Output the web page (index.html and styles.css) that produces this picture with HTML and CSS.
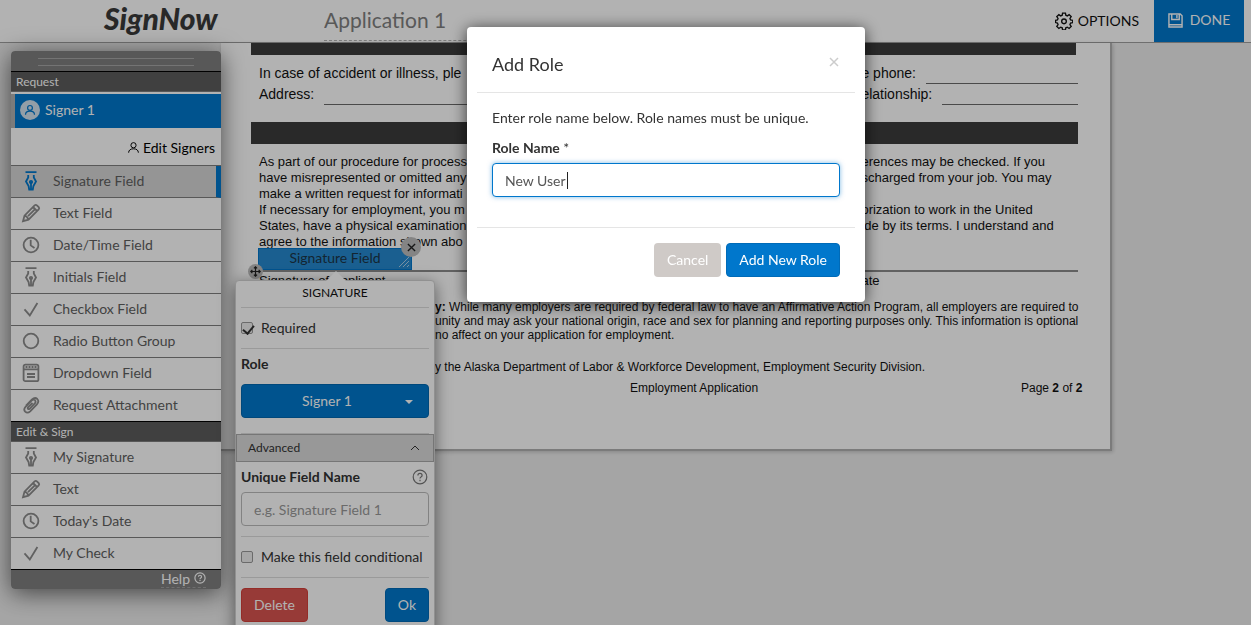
FILE: index.html
```html
<!DOCTYPE html>
<html lang="en">

<head>
    <meta charset="UTF-8" />
    <meta name="viewport" content="width=device-width, initial-scale=1" />
    <title>Application 1 - SignNow</title>
    <link rel="stylesheet" href="styles.css">
</head>

<body>
    <!-- Shared icons -->
    <svg class="sprite" aria-hidden="true">
        <symbol id="pen" viewBox="0 0 20 20">
            <path d="M4.5 1.2h11M7.2 4v2.500L5 10.500l2.600 4.500.6 3.500h3.600l.6-3.500 2.600-4.500-2.200-4V4M10 11v7" />
            <circle cx="10" cy="11" r="1.2" />
        </symbol>
        <symbol id="pencil" viewBox="0 0 20 20">
            <path d="M2 18.2l1.5-5.6L13.6 2.4q1.2-1 2.3 0l1.8 1.8q1 1.2 0 2.3L7.5 16.6zM12 4l4.2 4.2M3.5 12.6q2.5.4 4 4M7 13.200l6.600-6.600" />
        </symbol>
        <symbol id="clock" viewBox="0 0 20 20">
            <circle cx="10" cy="10" r="7.4" />
            <path d="M9.700 4.800v5.600l3.800 2.600" />
        </symbol>
        <symbol id="check" viewBox="0 0 20 20">
            <path d="M3.500 10.400l5.300 6L16.400 4" />
        </symbol>
        <symbol id="radio" viewBox="0 0 20 20">
            <circle cx="10" cy="10" r="7.300" />
        </symbol>
        <symbol id="list" viewBox="0 0 20 20">
            <rect x="2.600" y="1.600" width="14.800" height="16.600" rx="1.800" />
            <path d="M3 6.400h14M6 11h8M6 14h8" />
            <path d="M4.500 4h11" stroke-dasharray="2 1" />
        </symbol>
        <symbol id="clip" viewBox="0 0 20 20">
            <path d="M5 10.600l6-6.200q3-2.600 5.300-.4 2.200 2.400-.4 5.400l-6.700 7q-2.800 2.400-5 .3-2-2.400.3-4.900l6.300-6.400q1.800-1.500 3.200-.2 1.200 1.500-.2 3.200l-5.200 5.400q-.9.700-1.600.1-.6-.8.200-1.700l4.300-4.400" />
        </symbol>
        <symbol id="user" viewBox="0 0 20 20">
            <circle cx="10" cy="6.500" r="4" />
            <path d="M2.500 18c0-4 3-6 7.500-6s7.500 2 7.500 6" />
        </symbol>
        <symbol id="help" viewBox="0 0 20 20">
            <circle cx="10" cy="10" r="8.500" />
            <path d="M7.400 8q0-2.600 2.600-2.600T12.600 8q0 1.300-1.400 2-1.200.7-1.200 2M10 13.300v1.900" />
        </symbol>
    </svg>

    <header class="topbar">
        <a class="logo" href="#">SignNow</a>
        <input class="doc-title" type="text" value="Application 1" aria-label="Document name">
        <button class="options" type="button">
            <svg class="gear" viewBox="0 0 20 20">
                <path d="M8.400 1.200h3.200l.4 2.400 1.700.7 2-1.400 2.300 2.300-1.400 2 .7 1.700 2.400.4v2.400l-2.400.6-.7 1.700 1.400 2-2.300 2.300-2-1.400-1.700.7-.4 2.200H8.400L8 17.600l-1.700-.7-2 1.400L2 16l1.400-2-.7-1.700-2.100-.6V9.300l2.100-.4.700-1.700L2 5.200l2.300-2.300 2 1.400L8 3.600z" />
                <circle cx="10" cy="10.400" r="2.600" />
            </svg>
            OPTIONS
        </button>
        <button class="done" type="button">
            <svg class="disk" viewBox="0 0 16 16">
                <path d="M1 1h12l2 2v12H1zM4 1v6h8V1M1 12.500h14" />
                <path d="M9.500 2v3.500" />
            </svg>
            DONE
        </button>
    </header>

    <main class="workspace">
        <aside class="palette">
            <div class="grip"></div>
            <h2 class="palette-heading">Request</h2>
            <button class="signer" type="button">
                <span class="avatar"><svg><use href="#user" /></svg></span>
                Signer 1
            </button>
            <a class="edit-signers" href="#"><svg><use href="#user" /></svg>Edit Signers</a>
            <div class="tools">
                <button class="tool active" type="button"><svg><use href="#pen" /></svg>Signature Field</button>
                <button class="tool" type="button"><svg><use href="#pencil" /></svg>Text Field</button>
                <button class="tool" type="button"><svg><use href="#clock" /></svg>Date/Time Field</button>
                <button class="tool" type="button"><svg><use href="#pen" /></svg>Initials Field</button>
                <button class="tool" type="button"><svg><use href="#check" /></svg>Checkbox Field</button>
                <button class="tool" type="button"><svg><use href="#radio" /></svg>Radio Button Group</button>
                <button class="tool" type="button"><svg><use href="#list" /></svg>Dropdown Field</button>
                <button class="tool" type="button"><svg><use href="#clip" /></svg>Request Attachment</button>
            </div>
            <h2 class="palette-heading">Edit &amp; Sign</h2>
            <div class="tools">
                <button class="tool" type="button"><svg><use href="#pen" /></svg>My Signature</button>
                <button class="tool" type="button"><svg><use href="#pencil" /></svg>Text</button>
                <button class="tool" type="button"><svg><use href="#clock" /></svg>Today's Date</button>
                <button class="tool" type="button"><svg><use href="#check" /></svg>My Check</button>
            </div>
            <div class="palette-foot"><a href="#">Help <svg><use href="#help" /></svg></a></div>
        </aside>

        <article class="page">
            <div class="band band-top"></div>
            <div class="contact">
                <div class="blank">In case of accident or illness, ple</div>
                <div class="blank">e phone:<span class="line"></span></div>
                <div class="blank">Address:<span class="line"></span></div>
                <div class="blank">elationship:<span class="line"></span></div>
            </div>
            <div class="band"></div>
            <div class="terms">
                <p>As part of our procedure for process<br>have misrepresented or omitted any<br>make a written request for informati<br>If necessary for employment, you m<br>States, have a physical examination<br>agree to the information shown abo</p>
                <p>erences may be checked. If you<br>scharged from your job. You may<br><br>orization to work in the United<br>ide by its terms. I understand and</p>
            </div>
            <div class="sign-line">
                <span>Signature of Applicant</span>
                <span>ate</span>
            </div>
            <div class="notice">
                <p><b>y:</b> While many employers are required by federal law to have an Affirmative Action Program, all employers are required to<br>unity and may ask your national origin, race and sex for planning and reporting purposes only. This information is optional<br>no affect on your application for employment.</p>
                <p>y the Alaska Department of Labor &amp; Workforce Development, Employment Security Division.</p>
            </div>
            <footer class="page-foot">
                <span>Employment Application</span>
                <span>Page <b>2</b> of <b>2</b></span>
            </footer>

            <!-- Field placed on the document -->
            <div class="field">
                Signature Field
                <button class="field-close" type="button" aria-label="Remove field">
                    <svg viewBox="0 0 10 10"><path d="M1 1l8 8M9 1l-8 8" /></svg>
                </button>
                <span class="field-move">
                    <svg viewBox="0 0 14 14"><path d="M7 1v12M1 7h12M5 3l2-2 2 2M5 11l2 2 2-2M3 5L1 7l2 2M11 5l2 2-2 2" /></svg>
                </span>
                <svg class="field-resize" viewBox="0 0 12 12"><path d="M1 11L11 1M5 11l6-6M9 11l2-2" /></svg>
            </div>

            <form class="popover">
                <h3>SIGNATURE</h3>
                <label class="tick"><input type="checkbox" checked>Required</label>
                <div class="group role">
                    <label for="role">Role</label>
                    <div class="select">
                        <select id="role">
                            <option>Signer 1</option>
                        </select>
                    </div>
                </div>
                <button class="advanced" type="button">Advanced
                    <svg viewBox="0 0 10 10"><path d="M1 7l4-4 4 4" /></svg>
                </button>
                <div class="group">
                    <label for="field-name">Unique Field Name <svg><use href="#help" /></svg></label>
                    <input class="text-input" id="field-name" type="text" placeholder="e.g. Signature Field 1">
                </div>
                <label class="tick"><input type="checkbox">Make this field conditional</label>
                <div class="popover-actions">
                    <button class="btn btn-danger" type="button">Delete</button>
                    <button class="btn btn-primary" type="button">Ok</button>
                </div>
            </form>
        </article>
    </main>

    <div class="backdrop">
        <form class="modal" role="dialog" aria-labelledby="modal-title">
            <div class="modal-head">
                <h1 id="modal-title">Add Role</h1>
                <button class="modal-close" type="button" aria-label="Close">
                    <svg viewBox="0 0 10 10"><path d="M1 1l8 8M9 1l-8 8" /></svg>
                </button>
            </div>
            <div class="modal-body">
                <p>Enter role name below. Role names must be unique.</p>
                <label for="role-name">Role Name <span>*</span></label>
                <div class="role-input">
                    <input class="text-input focused" id="role-name" type="text" value="New User">
                    <span class="caret"></span>
                </div>
            </div>
            <div class="modal-foot">
                <button class="btn btn-muted" type="button">Cancel</button>
                <button class="btn btn-primary" type="button">Add New Role</button>
            </div>
        </form>
    </div>
</body>

</html>
```
FILE: styles.css
```css
* {
    box-sizing: border-box;
}

html,
body {
    margin: 0;
    padding: 0;
    height: 100%;
    overflow: hidden;
}

body {
    display: flex;
    flex-direction: column;
    font-family: 'Lato', sans-serif;
    font-size: 14px;
    line-height: 20px;
    color: #333;
    background: #ededed;
}

h1,
h2,
h3,
p {
    margin: 0;
    font-weight: normal;
}

a {
    color: inherit;
    text-decoration: none;
}

button,
input,
select {
    margin: 0;
    padding: 0;
    border: none;
    background: none;
    font: inherit;
    color: inherit;
}

svg {
    flex: none;
    fill: none;
    stroke: currentColor;
    stroke-width: 1.5;
}

.sprite {
    position: absolute;
    width: 0;
    height: 0;
}

/* Top bar */
.topbar {
    display: flex;
    align-items: center;
    flex: none;
    height: 43px;
    padding: 0 7px 0 104px;
    background: #fff;
    border-bottom: 1px solid #a0a0a0;
}

.logo {
    width: 220px;
    padding-bottom: 6px;
    font-size: 30px;
    line-height: 36px;
    font-weight: 900;
    font-style: italic;
    color: #3a3a3a;
}

.doc-title {
    flex: 1;
    height: 40px;
    margin-right: 340px;
    padding-bottom: 2px;
    border-bottom: 1px dashed #b4b4b4;
    font-size: 21px;
    color: #808080;
}

.options {
    display: flex;
    align-items: center;
    gap: 5px;
    margin-right: 15px;
    color: #111;
}

.gear {
    width: 18px;
    height: 18px;
}

.done {
    display: flex;
    align-items: center;
    justify-content: center;
    gap: 7px;
    width: 90px;
    height: 42px;
    padding-bottom: 2px;
    background: #07c;
    color: #fff;
}

.disk {
    width: 15px;
    height: 15px;
}

/* Workspace */
.workspace {
    display: flex;
    align-items: flex-start;
    flex: 1;
    min-height: 0;
}

.palette {
    position: relative;
    z-index: 1;
    flex: none;
    width: 210px;
    margin: 8px 0 0 11px;
    border-radius: 4px;
    background: #fff;
    box-shadow: 0 4px 24px rgba(0, 0, 0, 0.6);
}

.grip {
    height: 21px;
    padding: 7px 27px;
    border-radius: 4px 4px 0 0;
    border-bottom: 1px solid #000;
    background: #7f7f7f;
}

.grip::before {
    content: '';
    display: block;
    height: 6px;
    border: solid #a6a6a6;
    border-width: 1px 0;
}

.palette-heading {
    height: 20px;
    padding-left: 5px;
    border-bottom: 1px solid #7f7f7f;
    background: #5c5c5c;
    color: #fff;
    font-size: 12px;
}

.signer {
    display: flex;
    align-items: center;
    gap: 5px;
    width: 100%;
    height: 34px;
    margin-top: 2px;
    padding: 0 5px 2px;
    border-left: 4px solid #b0b0b0;
    background: #07c;
    color: #fff;
}

.avatar {
    display: flex;
    align-items: center;
    justify-content: center;
    width: 20px;
    height: 20px;
    border-radius: 50%;
    background: #d3e3ef;
    color: #07c;
}

.avatar svg {
    width: 12px;
    height: 12px;
    stroke-width: 2;
}

.edit-signers {
    display: flex;
    align-items: center;
    justify-content: flex-end;
    gap: 3px;
    height: 38px;
    padding: 2px 6px 0 0;
    border-bottom: 1px solid #7f7f7f;
    color: #000;
}

.edit-signers svg {
    width: 13px;
    height: 13px;
}

.tool {
    display: flex;
    align-items: center;
    gap: 12px;
    width: 100%;
    height: 32px;
    padding: 0 0 2px 10px;
    border-bottom: 1px solid #7f7f7f;
    color: #5f5f5f;
}

.tool svg {
    width: 20px;
    height: 20px;
    color: #8c8c8c;
    stroke-width: 1.8;
}

.tool:last-child {
    border-bottom-color: #000;
}

.tool.active {
    border-right: 5px solid #07c;
    background: #d6d6d6;
}

.tool.active svg {
    color: #07c;
}

.palette-foot {
    display: flex;
    justify-content: flex-end;
    height: 19px;
    padding-right: 15px;
    border-radius: 0 0 4px 4px;
    background: #7f7f7f;
    line-height: 18px;
    color: #fff;
}

.palette-foot a {
    display: flex;
    gap: 4px;
    height: 18px;
    border-bottom: 1px dashed #a0a0a0;
}

.palette-foot svg {
    width: 12px;
    height: 12px;
    margin-top: 2px;
    stroke-width: 2;
}

/* Document page */
.page {
    position: relative;
    flex: 1;
    height: 408px;
    margin-right: 139px;
    padding: 0 32px 0 30px;
    border-right: 2px solid #b0b0b0;
    border-bottom: 2px solid #b0b0b0;
    background: #fff;
    box-shadow: 1px 1px 4px rgba(0, 0, 0, 0.2);
    font-family: 'Liberation Sans', Arial, sans-serif;
    color: #111;
}

.band {
    height: 22px;
    background: #3c3c3c;
}

.band-top {
    height: 12px;
    margin-right: 2px;
}

.contact,
.terms,
.sign-line {
    display: grid;
    grid-template-columns: 1fr 217px;
    font-size: 13px;
}

.contact {
    padding: 8px 0 0 8px;
    margin-bottom: 17px;
    font-size: 14px;
}

.blank {
    display: flex;
    gap: 10px;
    height: 21px;
}

.line {
    flex: 1;
    border-bottom: 1px solid #6a6a6a;
}

.terms {
    padding: 10px 0 0 8px;
    line-height: 16px;
}

.sign-line {
    margin: 20px 0 0 8px;
    border-top: 2px solid #8c8c8c;
    line-height: 18px;
}

.notice {
    padding: 10px 0 0 184px;
    font-size: 12px;
    line-height: 14px;
    white-space: nowrap;
}

.notice p + p {
    margin-top: 18px;
}

.page-foot {
    display: flex;
    justify-content: space-between;
    margin: 4px -4px 0 379px;
    font-size: 12px;
}

/* Placed field */
.field {
    position: absolute;
    top: 205px;
    left: 37px;
    width: 154px;
    height: 22px;
    border: 1px solid #07c;
    background: #2689cf;
    font-family: 'Lato', sans-serif;
    line-height: 18px;
    text-align: center;
    color: #1c3548;
}

.field-close,
.field-move {
    position: absolute;
    display: flex;
    align-items: center;
    justify-content: center;
    border-radius: 50%;
    background: #bdbdbd;
    color: #222;
}

.field-close {
    top: -12px;
    right: -10px;
    width: 20px;
    height: 20px;
}

.field-close svg {
    width: 9px;
    height: 9px;
}

.field-move {
    left: -11px;
    bottom: -10px;
    width: 15px;
    height: 15px;
}

.field-move svg {
    width: 11px;
    height: 11px;
}

.field-resize {
    position: absolute;
    right: 1px;
    bottom: 1px;
    width: 12px;
    height: 12px;
    stroke: #a9cfea;
    stroke-width: 1;
}

/* Field settings */
.popover {
    position: absolute;
    top: 237px;
    left: 14px;
    z-index: 2;
    width: 200px;
    padding-bottom: 5px;
    border: 1px solid #d0d0d0;
    border-radius: 4px;
    background: #fff;
    box-shadow: 0 4px 16px rgba(0, 0, 0, 0.5);
    font-family: 'Lato', sans-serif;
    color: #333;
}

.popover::before {
    content: '';
    position: absolute;
    top: -10px;
    left: 90px;
    border: solid transparent;
    border-width: 0 10px 10px;
    border-bottom-color: #fff;
}

.popover h3 {
    height: 27px;
    margin: 0 5px;
    border-bottom: 1px solid #ddd;
    font-size: 12px;
    line-height: 24px;
    text-align: center;
    color: #111;
}

.tick {
    display: flex;
    align-items: center;
    gap: 8px;
    height: 41px;
    margin: 0 5px;
    border-bottom: 1px solid #ddd;
}

.tick input {
    appearance: none;
    width: 12px;
    height: 12px;
    border: 1px solid #999;
    border-radius: 2px;
    background: #eee;
}

.tick input:checked::before {
    content: '';
    display: block;
    width: 5px;
    height: 9px;
    margin-left: 3px;
    border: solid #333;
    border-width: 0 2px 2px 0;
    transform: rotate(40deg);
}

.group {
    margin: 0 5px;
    padding: 5px 0 10px;
    border-bottom: 1px solid #ddd;
}

.group label {
    display: flex;
    align-items: center;
    justify-content: space-between;
    margin-bottom: 5px;
    font-weight: bold;
}

.group label svg {
    width: 16px;
    height: 16px;
    margin-right: 1px;
    color: #777;
}

.role {
    padding-bottom: 15px;
}

.role label {
    margin-bottom: 10px;
}

.select {
    position: relative;
}

.select select {
    appearance: none;
    width: 100%;
    height: 34px;
    padding-right: 16px;
    border: 1px solid #0067b0;
    border-radius: 4px;
    background: #07c;
    color: #fff;
    text-align: center;
    text-align-last: center;
}

.select::after {
    content: '';
    position: absolute;
    top: 16px;
    right: 16px;
    border: solid transparent;
    border-width: 4px 4px 0;
    border-top-color: #fff;
}

.advanced {
    display: flex;
    align-items: center;
    justify-content: space-between;
    width: 100%;
    height: 28px;
    padding: 0 13px 0 11px;
    border: 1px solid #aaa;
    background: #dadada;
    font-size: 12px;
}

.advanced svg {
    width: 10px;
    height: 10px;
    stroke-width: 1;
}

.text-input {
    width: 100%;
    height: 34px;
    padding: 0 12px;
    border: 1px solid #bbb;
    border-radius: 4px;
    background: #fff;
    color: #555;
}

.text-input::placeholder {
    color: #999;
    opacity: 1;
}

.text-input.focused {
    border-color: #07c;
    outline: none;
    box-shadow: 0 0 5px rgba(0, 119, 204, 0.5);
}

.popover-actions {
    display: flex;
    justify-content: space-between;
    padding: 10px 5px;
}

.btn {
    height: 34px;
    padding: 0 12px;
    border: 1px solid transparent;
    border-radius: 4px;
    color: #fff;
}

.btn-primary {
    border-color: #006bb8;
    background: #07c;
}

.btn-danger {
    border-color: #d43f3a;
    background: #d9534f;
}

.btn-muted {
    background: #cfcac7;
}

/* Dialog */
.backdrop {
    position: fixed;
    inset: 0;
    z-index: 10;
    display: flex;
    align-items: flex-start;
    justify-content: center;
    padding: 27px 0 0 81px;
    background: rgba(0, 0, 0, 0.3);
}

.modal {
    width: 398px;
    padding: 0 10px;
    border-radius: 4px;
    background: #fff;
    box-shadow: 0 2px 16px rgba(0, 0, 0, 0.7);
}

.modal-head {
    display: flex;
    justify-content: space-between;
    padding: 27px 16px 18px 15px;
    border-bottom: 1px solid #e5e5e5;
}

.modal-head h1 {
    font-size: 18px;
}

.modal-close {
    height: 16px;
    color: #ccc;
}

.modal-close svg {
    display: block;
    width: 10px;
    height: 10px;
}

.modal-body {
    padding: 15px 15px 30px;
    border-bottom: 1px solid #e5e5e5;
}

.modal-body label {
    display: block;
    margin: 10px 0 5px;
    font-weight: bold;
}

.modal-body label span {
    font-weight: normal;
}

.role-input {
    position: relative;
}

/* Text cursor over the input */
.caret {
    position: absolute;
    top: 9px;
    left: 75px;
    width: 1px;
    height: 17px;
    background: #222;
}

.modal-foot {
    display: flex;
    justify-content: flex-end;
    gap: 5px;
    padding: 15px 15px 25px;
}
```
